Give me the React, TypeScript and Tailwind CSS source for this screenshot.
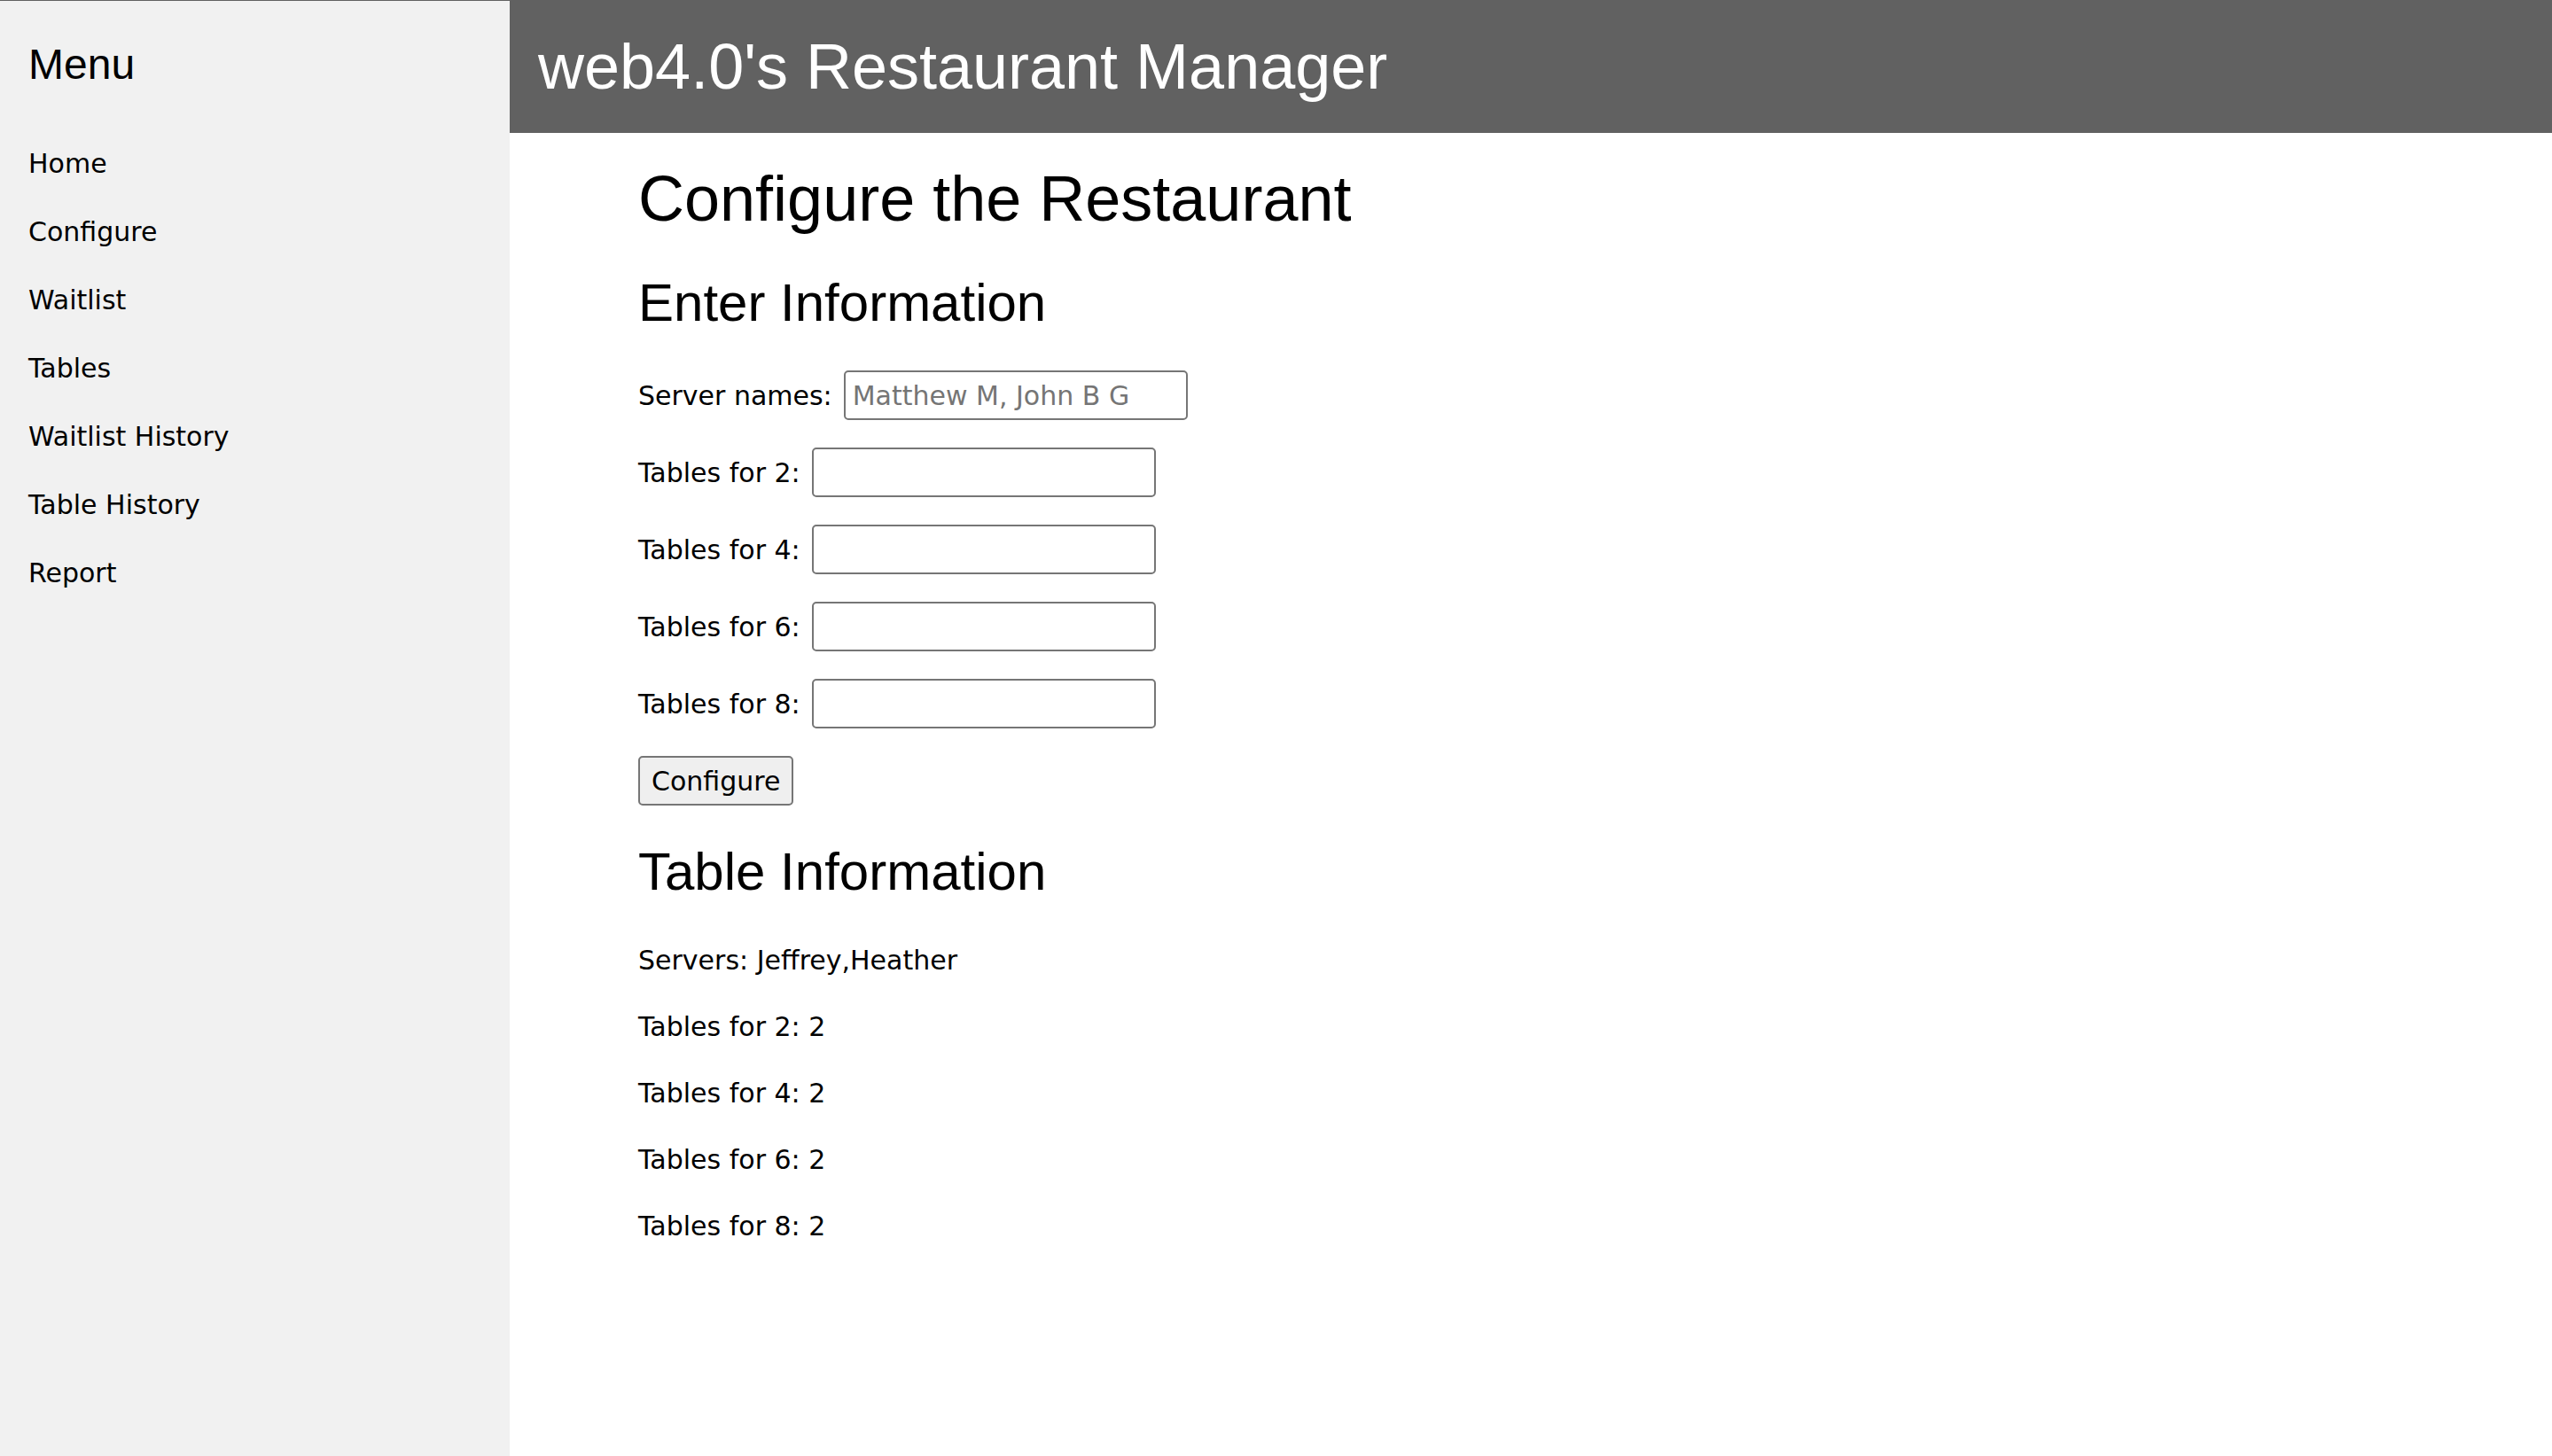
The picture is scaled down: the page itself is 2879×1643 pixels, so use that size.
const menuItems = [
  "Home",
  "Configure",
  "Waitlist",
  "Tables",
  "Waitlist History",
  "Table History",
  "Report",
];

const inputRows = [
  { label: "Server names:", placeholder: "Matthew M, John B G" },
  { label: "Tables for 2:", placeholder: "" },
  { label: "Tables for 4:", placeholder: "" },
  { label: "Tables for 6:", placeholder: "" },
  { label: "Tables for 8:", placeholder: "" },
];

const tableInfo = [
  "Servers: Jeffrey,Heather",
  "Tables for 2: 2",
  "Tables for 4: 2",
  "Tables for 6: 2",
  "Tables for 8: 2",
];

function Sidebar() {
  return (
    <aside className="w-[575px] shrink-0 border-t border-[#616161] bg-[#f1f1f1]">
      <h3 className="mt-[20px] mb-[21px] px-[32px] py-[16px] font-['Liberation_Sans',Arial,sans-serif] text-[48px] leading-[72px] font-normal">
        Menu
      </h3>
      <nav className="flex flex-col">
        {menuItems.map((item) => (
          <a
            key={item}
            href="#"
            className="block px-[32px] py-[16px] text-[30px] leading-[45px] text-black"
          >
            {item}
          </a>
        ))}
      </nav>
    </aside>
  );
}

function ConfigForm() {
  return (
    <form
      className="mt-[31px] flex flex-col items-start gap-[31px]"
      onSubmit={(e) => e.preventDefault()}
    >
      {inputRows.map((row) => (
        <div key={row.label} className="flex h-[56px] items-center gap-[13px]">
          <label className="text-[30px] leading-[45px]">{row.label}</label>
          <input
            type="text"
            placeholder={row.placeholder}
            className="h-[56px] w-[388px] rounded-[5px] border-2 border-[#767676] bg-white px-[8px] text-[30px] text-black outline-none placeholder:text-[#757575]"
          />
        </div>
      ))}
      <button
        type="submit"
        className="h-[56px] rounded-[5px] border-2 border-[#767676] bg-[#efefef] px-[13px] text-[30px] leading-[45px] text-black"
      >
        Configure
      </button>
    </form>
  );
}

export default function App() {
  return (
    <div className="flex min-h-screen bg-white font-['DejaVu_Sans',Verdana,sans-serif] text-black">
      <Sidebar />
      <main className="flex-1">
        <header className="h-[150px] bg-[#616161] px-[32px] pt-[21px]">
          <h1 className="font-['Liberation_Sans',Arial,sans-serif] text-[72px] leading-[108px] font-normal text-white">
            web4.0's Restaurant Manager
          </h1>
        </header>
        <div className="pl-[145px]">
          <h1 className="mt-[20px] font-['Liberation_Sans',Arial,sans-serif] text-[72px] leading-[108px] font-normal">
            Configure the Restaurant
          </h1>
          <h2 className="mt-[19px] font-['Liberation_Sans',Arial,sans-serif] text-[60px] leading-[90px] font-normal">
            Enter Information
          </h2>
          <ConfigForm />
          <h2 className="mt-[30px] font-['Liberation_Sans',Arial,sans-serif] text-[60px] leading-[90px] font-normal">
            Table Information
          </h2>
          <div className="mt-[32px] flex flex-col gap-[30px]">
            {tableInfo.map((line) => (
              <p key={line} className="text-[30px] leading-[45px]">
                {line}
              </p>
            ))}
          </div>
        </div>
      </main>
    </div>
  );
}
